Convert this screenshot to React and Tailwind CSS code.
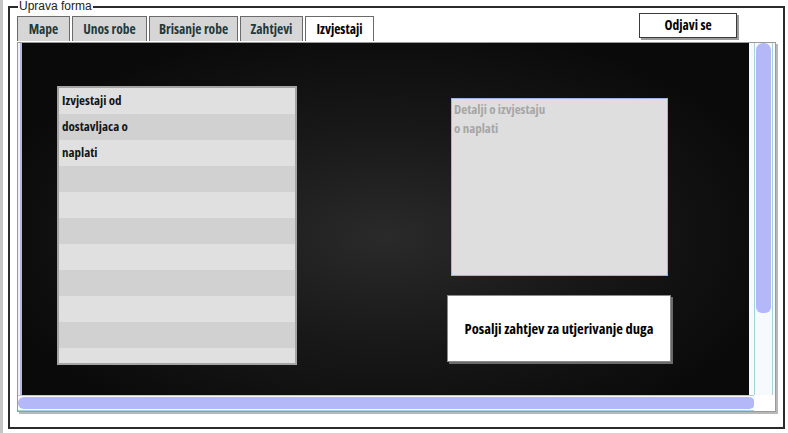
import React from 'react'

const narrow = "font-['Open_Sans','Roboto_Condensed',sans-serif] font-stretch-condensed"

const tabs = [
  { label: 'Mape', w: 'w-[53px]' },
  { label: 'Unos robe', w: 'w-[75px]' },
  { label: 'Brisanje robe', w: 'w-[89px]' },
  { label: 'Zahtjevi', w: 'w-[63px]' },
  { label: 'Izvjestaji', w: 'w-[69px]', active: true },
]

const rows = ['Izvjestaji od', 'dostavljaca o', 'naplati', '', '', '', '', '', '', '', '']

export default function App() {
  return (
    <div className="w-[788px] h-[433px] bg-white border-l-[3px] border-[#c4c4c4] overflow-hidden flex">
      <fieldset className="ml-[5px] w-[773px] h-[429px] border-2 border-[#2b2b2b] px-[7px] flex flex-col">
        <legend className="ml-[1px] px-[1px] text-[12px] leading-[13px] text-[#222] font-['Liberation_Sans',sans-serif]">
          Uprava forma
        </legend>

        {/* top row: tabs + logout */}
        <div className={`flex items-start h-[29px] ${narrow}`}>
          <div className="flex gap-[2px] mt-[3px]">
            {tabs.map((t) => (
              <div
                key={t.label}
                className={`${t.w} h-[25px] flex items-center justify-center whitespace-nowrap border border-[#6a6a6a] border-b-0 text-[13.5px] font-bold ${
                  t.active ? 'bg-white text-black' : 'bg-[#d6d6d6] text-[#1f3a3d]'
                }`}
              >
                {t.label}
              </div>
            ))}
          </div>
          <button className="ml-auto mr-[39px] w-[98px] h-[25px] bg-white border border-[#3a3a3a] shadow-[2px_2px_0_#9a9a9a] text-[13.5px] font-bold text-black">
            Odjavi se
          </button>
        </div>

        {/* scroll viewer */}
        <div className="w-[759px] h-[370px] border border-[#9a9a9a] shadow-[2px_2px_0_#b8b8b8] bg-white flex flex-col">
          <div className="flex h-[352px]">
            <div className="w-[4px] border-r-2 border-[#b6b8e6] bg-[#eef2f6]" />
            <div className={`w-[727px] bg-[radial-gradient(ellipse_at_50%_55%,#2a2a2a_0%,#181818_40%,#0a0a0a_80%)] flex pl-[35px] pt-[43px] ${narrow}`}>
              <div className="w-[240px] h-[279px] border-2 border-[#a4a4a4] flex flex-col overflow-hidden">
                {rows.map((r, i) => (
                  <div
                    key={i}
                    className={`h-[26px] shrink-0 flex items-center px-[3px] text-[13px] font-bold text-[#151515] ${
                      i % 2 === 0 ? 'bg-[#e0e0e0]' : 'bg-[#d1d1d1]'
                    }`}
                  >
                    {r}
                  </div>
                ))}
              </div>
              <div className="ml-[150px] flex flex-col">
                <div className="ml-[4px] mt-[12px] w-[217px] h-[178px] bg-[#dedede] border border-[#9fb2e6] px-[2px] pt-[1px] text-[13px] leading-[19px] font-bold text-[#a6a6a6]">
                  Detalji o izvjestaju
                  <br />o naplati
                </div>
                <button className="mt-[19px] w-[224px] h-[67px] bg-white border border-[#8a8a8a] shadow-[2px_2px_0_#6a6a6a] text-[14.5px] font-bold text-black">
                  Posalji zahtjev za utjerivanje duga
                </button>
              </div>
            </div>
            <div className="w-[26px] bg-[#f6fafc] pl-[5px] pr-[2px]">
              <div className="h-full border-x border-[#a9d2da] px-[1px]">
                <div className="h-[270px] bg-[#b4b8f8] rounded-[6px] rounded-t-[7px]" />
              </div>
            </div>
          </div>
          <div className="flex h-[16px]">
            <div className="w-[736px] border-y border-[#a9d2da] bg-[#f6fafc] py-[1px]">
              <div className="h-full w-[737px] bg-[#b4b8f8] rounded-[7px]" />
            </div>
            <div className="flex-1 bg-white" />
          </div>
        </div>
      </fieldset>
    </div>
  )
}
